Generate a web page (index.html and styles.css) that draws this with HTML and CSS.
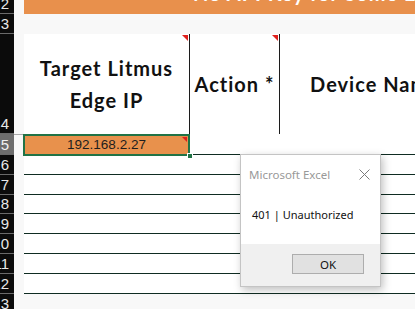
FILE: index.html
```html
<!DOCTYPE html>
<html lang="en">
<head>
    <meta charset="UTF-8">
    <title>Litmus Edge Sheet</title>
    <link rel="stylesheet" href="styles.css">
</head>
<body>
    <div class="workbook">
        <div class="row-heads">
            <div class="rh h14">2</div>
            <div class="rh h20">3</div>
            <div class="rh h100">4</div>
            <div class="rh h21 current">5</div>
            <div class="rh h20">6</div>
            <div class="rh h20">7</div>
            <div class="rh h19">8</div>
            <div class="rh h20">9</div>
            <div class="rh h20">10</div>
            <div class="rh h20">11</div>
            <div class="rh h20">12</div>
            <div class="rh h20">13</div>
        </div>

        <div class="sheet">
            <div class="banner"><span>No API Key for Some EZ</span></div>
            <div class="blank-row"></div>

            <div class="head-row">
                <div class="head-cell divided">
                    <span>Target Litmus<br>Edge IP</span>
                    <i class="note"></i>
                </div>
                <div class="head-cell divided">
                    <span>Action *</span>
                    <i class="note"></i>
                </div>
                <div class="head-cell wide">
                    <span>Device Name</span>
                </div>
            </div>

            <div class="data-row selected-row">
                <div class="cell selected">
                    192.168.2.27
                    <i class="note small"></i>
                    <i class="fill-handle"></i>
                </div>
            </div>
            <div class="data-row"></div>
            <div class="data-row"></div>
            <div class="data-row short"></div>
            <div class="data-row"></div>
            <div class="data-row"></div>
            <div class="data-row"></div>
            <div class="data-row"></div>
        </div>

        <div class="msgbox">
            <div class="msg-title">
                <span>Microsoft Excel</span>
                <svg width="11" height="11" viewBox="0 0 11 11">
                    <path d="M0.5 0.5 L10.5 10.5 M10.5 0.5 L0.5 10.5" stroke="#7a7a7a" stroke-width="1" fill="none"/>
                </svg>
            </div>
            <div class="msg-body">401 | Unauthorized</div>
            <div class="msg-foot">
                <button class="ok-btn">OK</button>
            </div>
        </div>
    </div>
</body>
</html>
```

FILE: styles.css
```css
* {
    margin: 0;
    padding: 0;
    box-sizing: border-box;
}

body {
    background-color: #f8f8f8;
    overflow: hidden;
    font-family: 'Liberation Sans', Arial, sans-serif;
}

.workbook {
    display: flex;
    position: relative;
    width: 415px;
    height: 309px;
    overflow: hidden;
}

/* row numbers */
.row-heads {
    width: 14px;
    flex-shrink: 0;
    background: #0b0b0b;
    overflow: hidden;
}

.rh {
    display: flex;
    align-items: flex-end;
    justify-content: flex-end;
    padding: 0 5px 2px 0;
    border-bottom: 1px solid #6a6a6a;
    color: #e8e8e8;
    font-size: 15px;
    line-height: 15px;
    white-space: nowrap;
}

.rh.current {
    background: #6d6d6d;
    color: #f2f2f2;
}

.h14 { height: 14px; }
.h19 { height: 19px; }
.h20 { height: 20px; }
.h21 { height: 21px; }
.h100 { height: 100px; }

/* sheet */
.sheet {
    flex: 1;
    padding-left: 10px;
    min-width: 0;
}

.banner {
    height: 14px;
    background: #e8904c;
    overflow: hidden;
    padding-left: 169px;
    color: #fff;
    font-family: 'Lato', sans-serif;
    font-weight: 700;
    font-size: 20px;
    letter-spacing: 1px;
    white-space: nowrap;
}

.banner span {
    display: block;
    line-height: 20px;
    margin-top: -17px;
}

.blank-row {
    height: 20px;
}

.head-row {
    display: grid;
    grid-template-columns: 166px 90px 190px;
    height: 101px;
    margin-left: -10px;
    padding-left: 10px;
    border-bottom: 1px solid #a9a9a9;
}

.head-cell {
    position: relative;
    display: flex;
    align-items: center;
    justify-content: center;
    background: #fff;
    text-align: center;
    font-family: 'Lato', sans-serif;
    font-weight: 700;
    font-size: 20px;
    letter-spacing: 1px;
    line-height: 32px;
    color: #111;
    white-space: nowrap;
}

.head-cell.divided {
    border-right: 1px solid #1c1c1c;
}

.note {
    position: absolute;
    top: 1px;
    right: 1px;
    width: 0;
    height: 0;
    border-top: 6px solid #e0201c;
    border-left: 6px solid transparent;
}

.note.small {
    border-top-width: 5px;
    border-left-width: 5px;
}

.data-row {
    height: 20px;
    background: #fff;
    border-bottom: 1px solid #0f2c22;
}

.data-row.short {
    height: 19px;
}

.selected-row {
    height: 21px;
}

.cell.selected {
    position: relative;
    width: 167px;
    height: 22px;
    margin: -1px 0 0 -1px;
    border: 2px solid #217346;
    background: #e8914c;
    background-clip: padding-box;
    text-align: center;
    font-size: 13.5px;
    line-height: 18px;
    color: #1d1d1d;
}

.fill-handle {
    position: absolute;
    right: -5px;
    bottom: -5px;
    width: 6px;
    height: 6px;
    background: #217346;
    border: 1px solid #fff;
}

/* message box */
.msgbox {
    position: absolute;
    left: 240px;
    top: 154px;
    width: 141px;
    height: 133px;
    background: #fff;
    border: 1px solid #c4c4c4;
    box-shadow: 2px 3px 8px rgba(0, 0, 0, 0.25);
    display: flex;
    flex-direction: column;
    font-family: 'Noto Sans', sans-serif;
}

.msg-title {
    display: flex;
    justify-content: space-between;
    align-items: center;
    padding: 9px 10px 0 8px;
    color: #999;
    font-size: 11.5px;
    height: 30px;
}

.msg-body {
    flex: 1;
    padding: 22px 0 0 11px;
    font-size: 11px;
    color: #111;
}

.msg-foot {
    height: 42px;
    background: #f0f0f0;
    display: flex;
    justify-content: flex-end;
    align-items: flex-start;
    padding: 10px 16px 0 0;
}

.ok-btn {
    width: 72px;
    height: 20px;
    background: #e1e1e1;
    border: 1px solid #adadad;
    font-family: 'Noto Sans', sans-serif;
    font-size: 11.5px;
    color: #111;
}
```
